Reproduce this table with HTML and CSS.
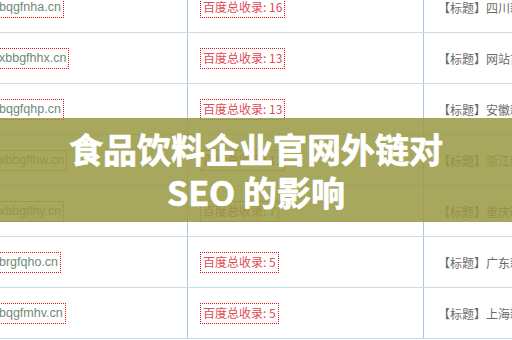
FILE: index.html
```html
<!DOCTYPE html>
<html lang="zh-CN">
<head>
<meta charset="utf-8">
<link rel="stylesheet" href="styles.css">
</head>
<body>
<div class="page">
  <div class="table">
    <div class="row"><div class="c1"><span class="dom">bqgfnha.cn</span></div><div class="c2"><span class="cnt">百度总收录: 16</span></div><div class="c3">【标题】四川新闻网</div></div>
    <div class="row"><div class="c1"><span class="dom">xbbgfhhx.cn</span></div><div class="c2"><span class="cnt">百度总收录: 13</span></div><div class="c3">【标题】网站首页</div></div>
    <div class="row"><div class="c1"><span class="dom">bqgfqhp.cn</span></div><div class="c2"><span class="cnt">百度总收录: 13</span></div><div class="c3">【标题】安徽新闻</div></div>
    <div class="row"><div class="c1"><span class="dom">xbbgflhw.cn</span></div><div class="c2"><span class="cnt">百度总收录: 11</span></div><div class="c3">【标题】浙江新闻</div></div>
    <div class="row"><div class="c1"><span class="dom">xbbgflhy.cn</span></div><div class="c2"><span class="cnt">百度总收录: 7</span></div><div class="c3">【标题】重庆新闻</div></div>
    <div class="row"><div class="c1"><span class="dom">brgfqho.cn</span></div><div class="c2"><span class="cnt">百度总收录: 5</span></div><div class="c3">【标题】广东新闻</div></div>
    <div class="row"><div class="c1"><span class="dom">bqgfmhv.cn</span></div><div class="c2"><span class="cnt">百度总收录: 5</span></div><div class="c3">【标题】上海新闻</div></div>
  </div>
  <div class="banner">
    <h1 class="title">食品饮料企业官网外链对<br>SEO 的影响</h1>
  </div>
</div>
</body>
</html>
```
FILE: styles.css
```css
html, body {
  margin: 0;
  padding: 0;
  background: #ffffff;
}
.page {
  position: relative;
  width: 512px;
  height: 340px;
  overflow: hidden;
  font-family: "Noto Sans CJK SC", sans-serif;
  font-size: 12px;
}
.table {
  display: flex;
  flex-direction: column;
  margin-top: -18px;
}
.row {
  display: flex;
  height: 50px;
  border-bottom: 1px solid #c9dcec;
  background: #fff;
}
.c1, .c2, .c3 {
  display: flex;
  align-items: center;
  white-space: nowrap;
  overflow: hidden;
}
.c1 {
  width: 187px;
  flex: none;
  border-right: 1px solid #a9c7e0;
}
.c2 {
  flex: none;
  width: 236px;
  box-sizing: border-box;
  border-right: 1px solid #a9c7e0;
  padding-left: 12px;
}
.c3 {
  flex: 1;
  padding-left: 14px;
  color: #6a6a6a;
}
.dom {
  margin-left: -5px;
  border: 1px dotted #e01010;
  padding: 2px 2px 2px 3px;
  color: #6f8a76;
  font-family: "Liberation Sans", "Noto Sans CJK SC", sans-serif;
  font-size: 12.5px;
  line-height: 15px;
}
.cnt {
  border: 1px dotted #e01010;
  padding: 1px 2px 2px 2px;
  color: #dd4b55;
  line-height: 16px;
}
.banner {
  position: absolute;
  left: 0;
  top: 118px;
  width: 512px;
  height: 104px;
  background: rgba(152, 153, 68, 0.86);
  display: flex;
  align-items: center;
  justify-content: center;
}
.title {
  margin: 0;
  color: #ffffff;
  font-family: "Noto Sans CJK SC", sans-serif;
  font-weight: 700;
  font-size: 34px;
  line-height: 43px;
  text-align: center;
  -webkit-text-stroke: 0.7px #ffffff;
}
```
